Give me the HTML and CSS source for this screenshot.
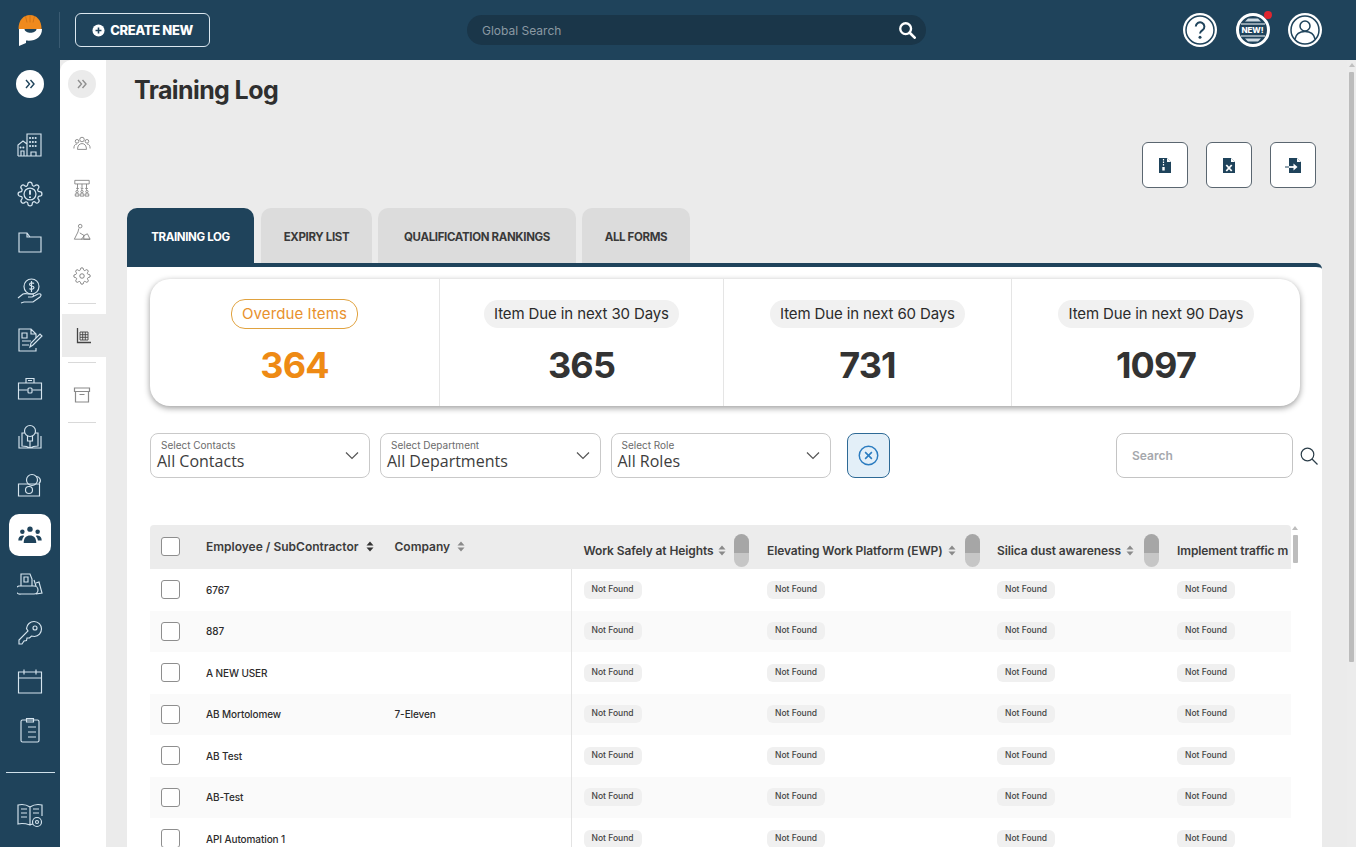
FILE: index.html
```html
<!DOCTYPE html>
<html lang="en">
<head>
<meta charset="utf-8">
<title>Training Log</title>
<link rel="stylesheet" href="styles.css">
</head>
<body>
<svg class="defs" aria-hidden="true">
  <symbol id="sort" viewBox="0 0 8 11"><path d="M4 0.5 7.5 4.5H.5zM4 10.5 .5 6.5h7z"/></symbol>
  <symbol id="chev" viewBox="0 0 14 9"><path d="M1 1.5 7 7.5l6-6" fill="none" stroke="#555" stroke-width="1.2"/></symbol>
  <symbol id="dbl" viewBox="0 0 12 10"><path d="M2 1l3.5 4L2 9M6.500 1 10 5 6.500 9" fill="none" stroke="currentColor" stroke-width="1.4"/></symbol>
</svg>
<header class="topbar">
  <svg class="logo" viewBox="0 0 24 32"><path fill="#f08a1d" d="M.5 15C.5 6 5.500 1 12 1s11.500 5 11.500 14z"/><path fill="#fff" d="M1 15v17l7-3v-2.500c9 1 16-3 16-11.500h-5.500c-.5 5-11.500 5-12 0z"/><path d="M7.500 2 9 8.500M12 1v7.500M16.500 2 15 8.500" stroke="#c96f14" stroke-width=".8" fill="none"/></svg>
  <span class="topsep"></span>
  <button class="create"><svg viewBox="0 0 14 14"><circle cx="7" cy="7" r="6.500" fill="#fff"/><path d="M7 3.800v6.400M3.800 7h6.400" stroke="#1f435b" stroke-width="1.700"/></svg>CREATE NEW</button>
  <div class="gsearch"><span>Global Search</span><svg viewBox="0 0 20 20"><circle cx="8.500" cy="8.500" r="6" fill="none" stroke="#fff" stroke-width="2.600"/><path d="M13 13l5.500 5.500" stroke="#fff" stroke-width="3" stroke-linecap="round"/></svg></div>
  <div class="topicons">
    <span class="round"><svg viewBox="0 0 34 34"><circle cx="17" cy="17" r="17" fill="#fff"/><circle cx="17" cy="17" r="14" fill="none" stroke="#1f435b" stroke-width="1.500"/><path d="M12.800 13.600a4.300 4.300 0 1 1 6.700 3.600c-1.500 1-2.500 1.800-2.500 3.400" fill="none" stroke="#1f435b" stroke-width="2"/><circle cx="17" cy="24.300" r="1.500" fill="#1f435b"/></svg></span>
    <span class="round newbadge"><svg viewBox="0 0 34 34"><circle cx="17" cy="17" r="15.500" fill="#1f435b" stroke="#fff" stroke-width="3"/><path d="M5 11h24M5 23h24" stroke="#fff" stroke-width="1.200"/><path d="M9 25.500h16l-3 3h-10zM9 8.500h16l-3-3h-10z" fill="#cfdbe3"/></svg><b>NEW!</b><i></i></span>
    <span class="round"><svg viewBox="0 0 34 34"><circle cx="17" cy="17" r="17" fill="#fff"/><circle cx="17" cy="17" r="14" fill="none" stroke="#1f435b" stroke-width="1.500"/><circle cx="17" cy="13" r="5" fill="none" stroke="#1f435b" stroke-width="1.500"/><path d="M7 26c1-5 5-7.500 10-7.500s9 2.500 10 7.500" fill="none" stroke="#1f435b" stroke-width="1.500"/></svg></span>
  </div>
</header>
<div class="shell">
  <nav class="rail">
    <span class="railtoggle"><svg><use href="#dbl"/></svg></span>
    <a class="ri"><svg viewBox="0 0 26 26"><path d="M10 24V2h14v22zM1 24V13l5-4 4 3M1 24h23M4 24v-5h3v5M14 24v-4h5v4"/><path class="dots" d="M13 6h8M13 10h8M13 14h8M3.500 15.500h3"/></svg></a>
    <a class="ri"><svg viewBox="0 0 24 24"><path d="M19.400 15a1.650 1.650 0 0 0 .33 1.820l.06.06a2 2 0 0 1-2.830 2.830l-.06-.06a1.650 1.650 0 0 0-2.820 1.180V21a2 2 0 0 1-4 0v-.09A1.650 1.650 0 0 0 9 19.400a1.650 1.650 0 0 0-1.820.33l-.06.06a2 2 0 0 1-2.830-2.830l.06-.06a1.650 1.650 0 0 0-1.180-2.820H3a2 2 0 0 1 0-4h.09A1.650 1.650 0 0 0 4.600 9a1.650 1.650 0 0 0-.33-1.820l-.06-.06a2 2 0 0 1 2.830-2.830l.06.06a1.650 1.650 0 0 0 2.820-1.180V3a2 2 0 0 1 4 0v.09a1.650 1.650 0 0 0 2.820 1.180l.06-.06a2 2 0 0 1 2.830 2.830l-.06.06a1.650 1.650 0 0 0 1.180 2.820H21a2 2 0 0 1 0 4h-.09a1.650 1.650 0 0 0-1.510 1z"/><circle cx="12" cy="12" r="5.500"/><path class="heavy" d="M12 8.500v4.300M12 14.400v1.300"/></svg></a>
    <a class="ri"><svg viewBox="0 0 26 26"><path d="M2 4h8l3 4h11v15H2zM10 4v4h3"/></svg></a>
    <a class="ri"><svg viewBox="0 0 26 26"><circle cx="14.500" cy="8.500" r="7.500"/><path d="M17 5.500c-1-1-4.500-1-4.500 1s4.500 1 4.500 3-3.500 2-4.500 1M14.500 3v11M1 20l5-4c2-1 4 0 6 0h3c2 0 2 3 0 3h-4M15 19l6-3c3-1 4 1 2 3l-7 5H7l-3 1"/></svg></a>
    <a class="ri"><svg viewBox="0 0 26 26"><path d="M19 11V7l-5-5H2v22h17v-3M14 2v5h5M5 6h5v5H5zM5 14h9M5 18h7"/><path d="M13 20l1-4 9-9 2 2-9 9z"/></svg></a>
    <a class="ri"><svg viewBox="0 0 26 26"><path d="M1.500 8h23v16h-23zM9 8V3.500h8V8M11 5.500h4M1.500 15h9M15.500 15h9"/><rect x="11" y="13" width="4" height="5" rx="1"/></svg></a>
    <a class="ri"><svg viewBox="0 0 26 26"><circle cx="13" cy="7" r="5.500"/><path d="M10.500 12v5h5v-5M2 12v12h22V12M13 24c-3-2-6-2-8-2V9h3M13 24c3-2 6-2 8-2V9h-3M13 17v7"/></svg></a>
    <a class="ri"><svg viewBox="0 0 26 26"><path d="M1.500 11h21v12h-21z"/><circle cx="12" cy="17" r="3.500"/><circle cx="15" cy="7" r="5.500"/><path d="M19 3.500a4 4 0 0 1 3 7M4 14v0M4 20v0M20 14v0M20 20v0"/></svg></a>
    <a class="ri active"><svg viewBox="0 0 26 20"><circle cx="13" cy="3.500" r="3"/><circle cx="4.500" cy="6.500" r="2.500"/><circle cx="21.500" cy="6.500" r="2.500"/><path d="M6 19c0-6 3-8.500 7-8.500s7 2.500 7 8.500zM0 16c0-3 1.500-5.500 4.500-5.500 1 0 1.500 .2 2 .5C5 13 4.300 15 4.200 16zM26 16c0-3-1.500-5.500-4.500-5.500-1 0-1.500 .2-2 .5 1.500 2 2.200 4 2.300 5z"/></svg></a>
    <a class="ri"><svg viewBox="0 0 26 26"><path d="M2 15h15a3 3 0 0 1 0 8H4a4 4 0 0 1-2-8zM4 15V3h9l2 5v7M7 6h4v5H7zM17 9l2 6M19 12l3-1 3 11-6 1"/></svg></a>
    <a class="ri"><svg viewBox="0 0 26 26"><circle cx="18" cy="8" r="2"/><path d="M9.500 8.500a7.500 7.500 0 1 1 8 8l-3-.5-2 2-2.500 0-.5 2.500-2.500.5L5 24H2v-4l9-9z"/></svg></a>
    <a class="ri"><svg viewBox="0 0 26 26"><path d="M1.500 4h23v21h-23zM1.500 10h23M7 1.500v5M19 1.500v5"/><path class="dots" d="M7 15h0M13 15h0M19 15h0M7 20h0M13 20h0M19 20h0"/></svg></a>
    <a class="ri"><svg viewBox="0 0 26 26"><rect x="4" y="3" width="18" height="22" rx="1.500"/><path d="M9.500 1.500h7V5h-7zM11 10h8M11 15h8M11 20h8"/><path class="dots" d="M7.500 10h0M7.500 15h0M7.500 20h0"/></svg></a>
    <hr class="railhr">
    <a class="ri last"><svg viewBox="0 0 26 26"><path d="M13 5C10 3 5 2 1 3v19c4-1 9 0 12 1 1-.5 2-1 3-1M13 5c3-2 8-3 12-2v11M13 5v18M4 7h6M4 11h6M4 15h6M16 7h6M16 11h6"/><circle cx="20" cy="20" r="4.500"/><circle cx="20" cy="20" r="1.500"/></svg></a>
  </nav>
  <aside class="subrail">
    <span class="subtoggle"><svg><use href="#dbl"/></svg></span>
    <a class="si"><svg viewBox="0 0 20 18"><circle cx="10" cy="4" r="2.500"/><circle cx="4.500" cy="6" r="2"/><circle cx="15.500" cy="6" r="2"/><path d="M5 15c0-4 2-6.500 5-6.500s5 2.500 5 6.500zM1 14c0-3 1-5 3.500-5M19 14c0-3-1-5-3.500-5"/></svg></a>
    <a class="si"><svg viewBox="0 0 20 20"><path d="M2 1.500h16v4H2zM5 5.500v6M10 5.500v6M15 5.500v6M3.500 10 5 11.500 6.500 10M8.500 10 10 11.500 11.500 10M13.500 10 15 11.500 16.500 10"/><circle cx="4.500" cy="14" r="1.300"/><circle cx="10" cy="14" r="1.300"/><circle cx="15.500" cy="14" r="1.300"/><path d="M2.500 19v-2.500h4V19zM8 19v-2.500h4V19zM13.500 19v-2.500h4V19z"/></svg></a>
    <a class="si"><svg viewBox="0 0 20 20"><circle cx="8" cy="3.500" r="2"/><path d="M6.500 6l-1 4-4 8h8l3-4-5-3M12 18v-4l4-2 3 6zM9 18h10"/></svg></a>
    <a class="si gear"><svg viewBox="0 0 24 24"><circle cx="12" cy="12" r="3"/><path d="M19.400 15a1.650 1.650 0 0 0 .33 1.820l.06.06a2 2 0 0 1-2.830 2.830l-.06-.06a1.650 1.650 0 0 0-2.820 1.180V21a2 2 0 0 1-4 0v-.09A1.650 1.650 0 0 0 9 19.400a1.650 1.650 0 0 0-1.820.33l-.06.06a2 2 0 0 1-2.830-2.830l.06-.06a1.650 1.650 0 0 0-1.180-2.820H3a2 2 0 0 1 0-4h.09A1.650 1.650 0 0 0 4.600 9a1.650 1.650 0 0 0-.33-1.820l-.06-.06a2 2 0 0 1 2.830-2.830l.06.06a1.650 1.650 0 0 0 2.820-1.180V3a2 2 0 0 1 4 0v.09a1.650 1.650 0 0 0 2.820 1.180l.06-.06a2 2 0 0 1 2.830 2.830l-.06.06a1.650 1.650 0 0 0 1.180 2.820H21a2 2 0 0 1 0 4h-.09a1.650 1.650 0 0 0-1.510 1z"/></svg></a>
    <hr class="subhr">
    <a class="si current"><svg viewBox="0 0 18 18"><path class="thick" d="M2.500 1v14.500H16"/><path class="grid" d="M5 5h8v8H5zM5 7.700h8M5 10.300h8M7.700 5v8M10.300 5v8"/></svg></a>
    <hr class="subhr second">
    <a class="si archive"><svg viewBox="0 0 18 18"><path d="M1.500 2h15v3.500h-15zM2.500 5.500V16h13V5.500M6.500 8.500h5"/></svg></a>
    <hr class="subhr third">
  </aside>
  <main class="main">
    <div class="content">
      <h1>Training Log</h1>
      <div class="actions">
        <button class="act"><svg viewBox="0 0 12 15"><path d="M0 0h8l4 4v11H0z"/><path d="M8 0v4h4" fill="#fff"/><path d="M4.500 1v1.500M4.500 3.500V5M4.500 6v1.500" stroke="#fff" stroke-width="1.200"/><rect x="3.300" y="9" width="2.400" height="3.500" fill="#fff"/></svg></button>
        <button class="act"><svg viewBox="0 0 12 15"><path d="M0 0h8l4 4v11H0z"/><path d="M8 0v4h4" fill="#fff"/><path d="M3.300 7l5.400 6M8.700 7l-5.400 6" stroke="#fff" stroke-width="1.800"/></svg></button>
        <button class="act"><svg viewBox="0 0 16 15"><path d="M4 0h8l4 4v11H4z"/><path d="M12 0v4h4" fill="#fff"/><path d="M0 9h4" stroke="#1f435b" stroke-width="1"/><path d="M4 9h7" stroke="#fff" stroke-width="1.800"/><path d="M8.500 5.500 12.500 9l-4 3.500z" fill="#fff"/></svg></button>
      </div>
      <div class="tabs">
        <a class="tab on t1">TRAINING LOG</a>
        <a class="tab t2">EXPIRY LIST</a>
        <a class="tab t3">QUALIFICATION RANKINGS</a>
        <a class="tab t4">ALL FORMS</a>
      </div>
      <section class="panel">
        <div class="stats">
          <div class="stat"><span class="pill over">Overdue Items</span><strong class="orange">364</strong></div>
          <div class="stat"><span class="pill">Item Due in next 30 Days</span><strong>365</strong></div>
          <div class="stat"><span class="pill">Item Due in next 60 Days</span><strong>731</strong></div>
          <div class="stat"><span class="pill">Item Due in next 90 Days</span><strong>1097</strong></div>
        </div>
        <div class="filters">
          <div class="sel s1"><label>Select Contacts</label><span>All Contacts</span><svg><use href="#chev"/></svg></div>
          <div class="sel s2"><label>Select Department</label><span>All Departments</span><svg><use href="#chev"/></svg></div>
          <div class="sel s3"><label>Select Role</label><span>All Roles</span><svg><use href="#chev"/></svg></div>
          <button class="clear"><svg viewBox="0 0 20 20"><circle cx="10" cy="10" r="8.800" fill="none" stroke="#2b7cc0" stroke-width="1.400"/><path d="M6.800 6.800l6.400 6.400M13.200 6.800l-6.400 6.400" stroke="#2b7cc0" stroke-width="1.500"/></svg></button>
          <div class="search"><span>Search</span></div>
          <svg class="lens" viewBox="0 0 18 18"><circle cx="7.500" cy="7.500" r="6.300" fill="none" stroke="#2c3e4a" stroke-width="1.200"/><path d="M12 12l5.500 5.500" stroke="#2c3e4a" stroke-width="1.200"/></svg>
        </div>
        <div class="tablewrap">
          <div class="table">
            <div class="row head">
              <div class="c ck"><span class="box"></span></div>
              <div class="c name">Employee / SubContractor<svg class="sort"><use href="#sort"/></svg></div>
              <div class="c comp">Company<svg class="sort dim"><use href="#sort"/></svg></div>
              <div class="c q q1"><span class="qt">Work Safely at Heights<svg class="sort dim"><use href="#sort"/></svg></span><span class="tog"></span></div>
              <div class="c q q2"><span class="qt">Elevating Work Platform (EWP)<svg class="sort dim"><use href="#sort"/></svg></span><span class="tog"></span></div>
              <div class="c q q3"><span class="qt">Silica dust awareness<svg class="sort dim"><use href="#sort"/></svg></span><span class="tog"></span></div>
              <div class="c q q4"><span class="qt">Implement traffic m</span></div>
            </div>
            <div class="row"><div class="c ck"><span class="box"></span></div><div class="c name">6767</div><div class="c comp"></div><div class="c q"><span class="nf">Not Found</span></div><div class="c q"><span class="nf">Not Found</span></div><div class="c q"><span class="nf">Not Found</span></div><div class="c q"><span class="nf">Not Found</span></div></div>
            <div class="row"><div class="c ck"><span class="box"></span></div><div class="c name">887</div><div class="c comp"></div><div class="c q"><span class="nf">Not Found</span></div><div class="c q"><span class="nf">Not Found</span></div><div class="c q"><span class="nf">Not Found</span></div><div class="c q"><span class="nf">Not Found</span></div></div>
            <div class="row"><div class="c ck"><span class="box"></span></div><div class="c name">A NEW USER</div><div class="c comp"></div><div class="c q"><span class="nf">Not Found</span></div><div class="c q"><span class="nf">Not Found</span></div><div class="c q"><span class="nf">Not Found</span></div><div class="c q"><span class="nf">Not Found</span></div></div>
            <div class="row"><div class="c ck"><span class="box"></span></div><div class="c name">AB Mortolomew</div><div class="c comp">7-Eleven</div><div class="c q"><span class="nf">Not Found</span></div><div class="c q"><span class="nf">Not Found</span></div><div class="c q"><span class="nf">Not Found</span></div><div class="c q"><span class="nf">Not Found</span></div></div>
            <div class="row"><div class="c ck"><span class="box"></span></div><div class="c name">AB Test</div><div class="c comp"></div><div class="c q"><span class="nf">Not Found</span></div><div class="c q"><span class="nf">Not Found</span></div><div class="c q"><span class="nf">Not Found</span></div><div class="c q"><span class="nf">Not Found</span></div></div>
            <div class="row"><div class="c ck"><span class="box"></span></div><div class="c name">AB-Test</div><div class="c comp"></div><div class="c q"><span class="nf">Not Found</span></div><div class="c q"><span class="nf">Not Found</span></div><div class="c q"><span class="nf">Not Found</span></div><div class="c q"><span class="nf">Not Found</span></div></div>
            <div class="row"><div class="c ck"><span class="box"></span></div><div class="c name">API Automation 1</div><div class="c comp"></div><div class="c q"><span class="nf">Not Found</span></div><div class="c q"><span class="nf">Not Found</span></div><div class="c q"><span class="nf">Not Found</span></div><div class="c q"><span class="nf">Not Found</span></div></div>
          </div>
          <div class="tscroll"><i></i><b></b></div>
        </div>
      </section>
    </div>
    <div class="pscroll"><i></i><b></b></div>
  </main>
</div>
</body>
</html>
```
FILE: styles.css
```css
* { box-sizing: border-box; }
html, body { margin: 0; height: 847px; overflow: hidden; }
body { font-family: Inter, "Noto Sans", sans-serif; background: #ebebeb; color: #2f2f2f; }
.defs { display: none; }
button { font-family: inherit; padding: 0; cursor: pointer; }

.topbar { height: 60px; background: #1f435b; display: flex; align-items: center; position: relative; }
.logo { width: 24px; height: 32px; margin-left: 18px; flex: none; }
.topsep { width: 1px; height: 36px; background: #3a5b72; margin-left: 17px; }
.create { margin-left: 15px; width: 135px; height: 34px; border: 1px solid #dbe7ef; border-radius: 6px; background: transparent; color: #fff; font-weight: 800; font-size: 13px; letter-spacing: -.35px; display: flex; align-items: center; justify-content: center; gap: 5px; }
.create svg { width: 13px; height: 13px; }
.gsearch { margin-left: 257px; width: 459px; height: 30px; border-radius: 15px; background: #1a3649; display: flex; align-items: center; justify-content: space-between; padding: 0 10px 0 15px; font-size: 12px; color: #8b99a3; }
.gsearch svg { width: 18px; height: 18px; }
.topicons { margin-left: 257px; display: flex; gap: 18.500px; }
.round { width: 34px; height: 34px; display: block; position: relative; }
.round svg { width: 34px; height: 34px; display: block; }
.newbadge b { position: absolute; left: 0; right: 0; top: 11.500px; text-align: center; color: #fff; font-size: 8px; font-weight: 800; line-height: 11px; letter-spacing: -.1px; }
.newbadge i { position: absolute; width: 8px; height: 8px; border-radius: 50%; background: #e0262f; left: 28px; top: -2px; }

.shell { display: flex; height: 787px; }
.rail { width: 60px; background: #1f435b; display: flex; flex-direction: column; align-items: center; flex: none; padding-top: 10px; }
.railtoggle { width: 28px; height: 28px; border-radius: 50%; background: #fff; color: #1f435b; display: flex; align-items: center; justify-content: center; margin-bottom: 34px; }
.railtoggle svg, .subtoggle svg { width: 12px; height: 10px; }
.ri { width: 26px; height: 26px; margin-bottom: 22.700px; display: block; flex: none; }
.ri svg { width: 26px; height: 26px; fill: none; stroke: #d5e4ee; stroke-width: 1.150; display: block; }
.ri .dots { stroke-width: 2; stroke-linecap: round; stroke-dasharray: .1 2.700; }
.ri .heavy { stroke-width: 1.800; }
.ri.active { width: 42px; height: 42px; margin: -7.700px 0 15px; border-radius: 10px; background: #fff; display: flex; align-items: center; justify-content: center; }
.ri.active svg { width: 24px; height: 18px; fill: #1f435b; stroke: none; }
.railhr { width: 49px; height: 1px; border: 0; margin: 6px 0 29px; background: #cfe0ea; flex: none; }
.ri.last { margin: 0; }

.subrail { width: 46px; background: #fff; border-radius: 12px 0 0 0; flex: none; display: flex; flex-direction: column; align-items: center; padding-top: 10px; }
.subtoggle { width: 28px; height: 28px; border-radius: 50%; background: #ebebeb; color: #8f8f8f; display: flex; align-items: center; justify-content: center; margin: 0 2px 37px 0; }
.si { width: 18px; height: 18px; margin-bottom: 26px; display: block; flex: none; margin-right: 2px; }
.si svg { width: 18px; height: 18px; fill: none; stroke: #777; stroke-width: .9; display: block; }
.si.gear svg { stroke-width: 1.200; }
.subhr { width: 28px; height: 1px; margin: -8px 2px 10px 0; border: 0; background: #d9d9d9; flex: none; }
.si.current { width: 44px; height: 43px; margin: 0 0 0 2px; background: #ebebeb; display: flex; align-items: center; justify-content: center; padding-right: 0; }
.si.current svg { stroke: #444; }
.si.current .thick { stroke-width: 1.300; }
.si.current .grid { stroke-width: .9; }
.subhr.second { margin: 5px 2px 23px 0; }
.si.archive svg { stroke: #8a8a8a; stroke-width: 1.200; }
.si.archive { margin-bottom: 18px; }
.subhr.third { margin: 0 2px 0 0; }

.main { flex: 1; display: flex; overflow: hidden; min-width: 0; }
.content { flex: 1; padding: 0 25px 0 21px; min-width: 0; }
h1 { margin: 13px 0 0 7px; font-size: 25px; line-height: 35px; font-weight: 700; letter-spacing: -.6px; color: #2f2f2f; }
.actions { display: flex; justify-content: flex-end; gap: 18px; margin: 34px 6px 0 0; }
.act { width: 46px; height: 46px; border: 1px solid #5a6670; border-radius: 6px; background: #fff; display: flex; align-items: center; justify-content: center; }
.act svg { width: 12px; height: 15px; fill: #1f435b; }
.act:last-child svg { width: 16px; }
.tabs { display: flex; margin-top: 20px; height: 55px; gap: 6px; }
.tab { height: 55px; padding-top: 3px; background: #dcdcdc; border-radius: 10px 10px 0 0; display: flex; align-items: center; justify-content: center; font-size: 11.500px; font-weight: 700; color: #3a3a3a; letter-spacing: -.35px; }
.tab.on { background: #1f435b; color: #fff; margin-right: 1px; }
.t1 { width: 127px; } .t2 { width: 111px; } .t3 { width: 198px; } .t4 { width: 108px; }

.panel { background: #fff; border-top: 4px solid #1f435b; border-radius: 0 6px 0 0; padding: 12px 0 0 23px; height: 600px; overflow: hidden; }
.stats { width: 1150px; height: 127px; display: grid; grid-template-columns: 290px 284px 288px 1fr; background: #fff; border-radius: 20px; box-shadow: 0 2px 6px rgba(0,0,0,.4); }
.stat { display: flex; flex-direction: column; align-items: center; border-right: 1px solid #e5e5e5; padding-top: 21px; }
.stat:last-child { border: 0; }
.pill { height: 28px; margin: 0 0 1px; padding: 0 10.500px; border-radius: 14px; background: #f1f1f1; font-size: 15px; line-height: 28px; color: #2b2b2b; letter-spacing: -.12px; white-space: nowrap; }
.pill.over { background: #fff; border: 1px solid #e0a23f; color: #e8912d; height: 30px; margin: -1px 0 0; line-height: 28px; letter-spacing: .1px; }
.stat strong { font-size: 36px; font-weight: 700; line-height: 44px; margin-top: 14px; letter-spacing: -.8px; color: #333; }
.stat strong.orange { color: #ee8a14; }

.filters { display: flex; align-items: center; margin-top: 27px; height: 45px; }
.sel { position: relative; height: 45px; width: 220px; margin-right: 10px; border: 1px solid #c9c9c9; border-radius: 8px; padding: 5px 0 0 6px; }
.s2 { width: 221px; margin-right: 9.500px; }
.s3 { width: 220.500px; }
.sel label { display: block; font-size: 10px; line-height: 12px; color: #6b6b6b; padding-left: 4px; }
.sel span { display: block; font-family: "Open Sans", sans-serif; font-size: 16px; line-height: 22px; color: #3d3d3d; margin-top: -1px; }
.sel svg { position: absolute; right: 10px; top: 17px; width: 14px; height: 9px; }
.clear { width: 43px; height: 45px; margin-left: 6px; border: 1px solid #2e6a96; border-radius: 8px; background: #e3eff8; display: flex; align-items: center; justify-content: center; }
.clear svg { width: 21px; height: 21px; }
.search { width: 177px; height: 45px; margin-left: 226px; border: 1px solid #c4c4c4; border-radius: 8px; display: flex; align-items: center; padding-left: 15px; font-size: 12px; font-weight: 600; color: #a5a8ad; }
.lens { width: 18px; height: 18px; margin-left: 7px; }

.tablewrap { display: flex; margin-top: 47px; width: 1150px; }
.table { width: 1141px; overflow: hidden; flex: none; }
.row { display: grid; grid-template-columns: 56px 188.500px 177.500px 183.500px 230px 180px 125.500px; grid-auto-rows: 41.500px; width: 1141px; }
.row:nth-child(odd) { background: #fafafa; }
.row.head { grid-auto-rows: 44px; background: #ececec; border-radius: 4px 4px 0 0; }
.c { display: flex; align-items: center; min-width: 0; white-space: nowrap; font-size: 10px; font-weight: 500; color: #2c2c2c; letter-spacing: -.1px; }
.ck { padding-left: 10.500px; }
.box { width: 19px; height: 19px; border: 1px solid #8e8e8e; border-radius: 3px; background: #fff; display: block; }
.comp { border-right: 1px solid #e3e3e3; }
.head .comp { border-right: 0; }
.head .c { font-size: 12px; font-weight: 600; color: #3c3c3c; letter-spacing: 0; }
.head .ck, .head .name, .head .comp { padding-bottom: 2px; }
.head .q { letter-spacing: -.1px; }
.sort { width: 8px; height: 11px; margin-left: 7px; fill: #333; flex: none; }
.sort.dim { fill: #8a8a8a; }
.q { padding-left: 11.500px; }
.q .sort { margin-left: 5px; }
.head .q { align-items: flex-end; overflow: hidden; }
.qt { display: flex; align-items: center; height: 17px; margin-bottom: 10.500px; }
.tog { margin-left: auto; margin-bottom: 2px; margin-right: 6.500px; width: 15px; height: 33px; border-radius: 8px; flex: none; background: linear-gradient(#a6a6a6 0 19px, #c6c6c6 19px); }
.q2 .tog { margin-right: 5.500px; }
.nf { background: #f0f0f0; border-radius: 6px; height: 18px; width: 58px; text-align: center; font-size: 8.500px; line-height: 17px; color: #444; letter-spacing: 0; }

.tscroll { width: 9px; height: 44px; flex: none; }
.tscroll i { display: block; width: 0; height: 0; margin: 1px 0 0 1px; border: 3px solid transparent; border-top: 0; border-bottom: 4px solid #bdbdbd; }
.tscroll b { display: block; width: 5px; height: 28px; margin: 5px 0 0 2px; background: #bdbdbd; border-radius: 1px; }
.pscroll { width: 9px; flex: none; background: #ececec; }
.pscroll i { display: block; width: 0; height: 0; margin: 3px 0 0 1.500px; border: 3px solid transparent; border-top: 0; border-bottom: 4px solid #c0c0c0; }
.pscroll b { display: block; width: 5px; height: 590px; margin: 5px 0 0 2px; background: #bcbcbc; border-radius: 1px; }
```
